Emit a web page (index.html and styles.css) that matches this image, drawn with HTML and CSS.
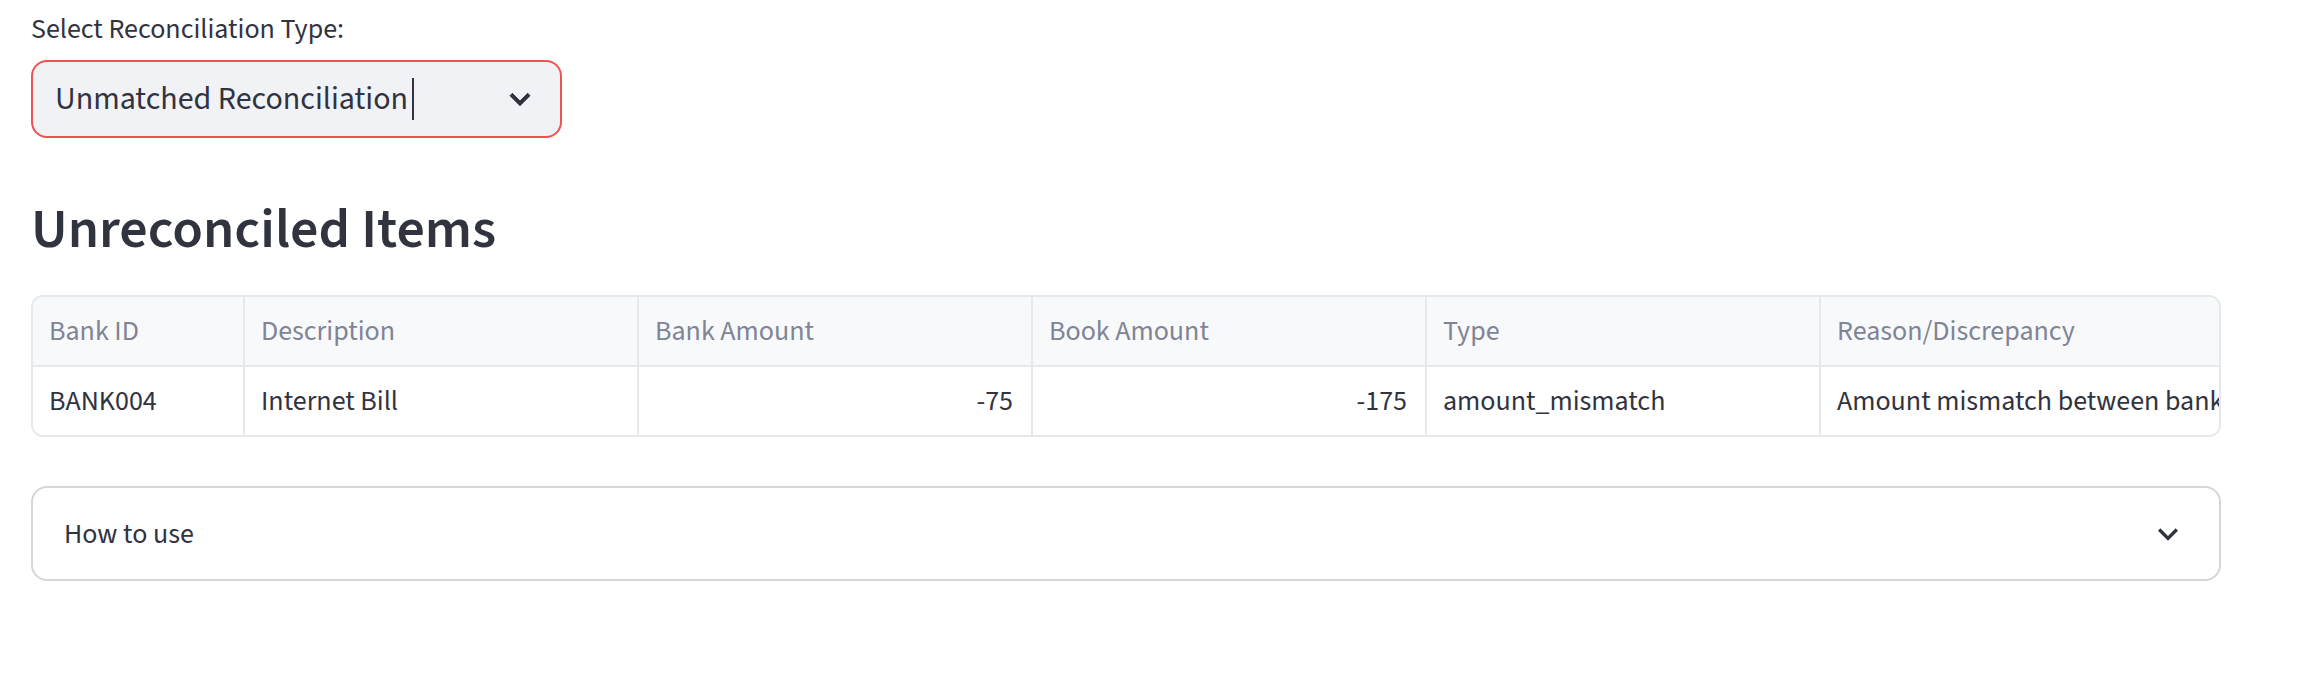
FILE: index.html
```html
<!DOCTYPE html>
<html lang="en">
<head>
<meta charset="utf-8">
<title>Reconciliation</title>
<link rel="stylesheet" href="styles.css">
</head>
<body>
<main class="page">
  <div class="field">
    <label class="field-label">Select Reconciliation Type:</label>
    <div class="select">
      <span class="select-value">Unmatched Reconciliation</span><span class="caret"></span>
      <svg class="select-chevron" viewBox="0 0 24 24" width="40" height="40" aria-hidden="true"><path d="M16.59 8.59L12 13.17 7.41 8.59 6 10l6 6 6-6z"/></svg>
    </div>
  </div>

  <h3 class="heading">Unreconciled Items</h3>

  <div class="grid-wrap">
    <div class="grid">
      <div class="cell head">Bank ID</div>
      <div class="cell head">Description</div>
      <div class="cell head">Bank Amount</div>
      <div class="cell head">Book Amount</div>
      <div class="cell head">Type</div>
      <div class="cell head last">Reason/Discrepancy</div>
      <div class="cell body">BANK004</div>
      <div class="cell body">Internet Bill</div>
      <div class="cell body num">-75</div>
      <div class="cell body num">-175</div>
      <div class="cell body">amount_mismatch</div>
      <div class="cell body last">Amount mismatch between bank and book records</div>
    </div>
  </div>

  <div class="expander">
    <span class="expander-label">How to use</span>
    <svg class="expander-chevron" viewBox="0 0 24 24" width="40" height="40" aria-hidden="true"><path d="M16.59 8.59L12 13.17 7.41 8.59 6 10l6 6 6-6z"/></svg>
  </div>
</main>
</body>
</html>
```

FILE: styles.css
```css
* { box-sizing: border-box; }

html, body {
  margin: 0;
  padding: 0;
  background: #ffffff;
}

body {
  font-family: "Source Sans Pro", "Source Sans 3", Lato, sans-serif;
  color: #31333f;
}

.page {
  width: 2221px;
  padding: 8px 0 0 31px;
  display: flex;
  flex-direction: column;
}

.field {
  display: flex;
  flex-direction: column;
  width: 531px;
}

.field-label {
  font-size: 28px;
  line-height: 42px;
  height: 42px;
  margin-bottom: 10px;
  color: #31333f;
}

.select {
  height: 78px;
  background: #f0f2f6;
  border: 2px solid #ef5350;
  border-radius: 16px;
  display: flex;
  align-items: center;
  padding: 0 20px 0 22px;
}

.select-value {
  font-size: 32px;
  line-height: 1;
  color: #31333f;
}

.caret {
  display: inline-block;
  width: 2px;
  height: 42px;
  background: #31333f;
  margin-left: 4px;
}

.select-chevron {
  margin-left: auto;
  fill: #31333f;
  stroke: #31333f;
  stroke-width: 0.6;
}

.heading {
  margin: 58px 0 0 0;
  font-size: 56px;
  line-height: 67px;
  font-weight: 600;
  color: #31333f;
}

.grid-wrap {
  margin-top: 32px;
  width: 2190px;
  border: 2px solid #e6e8ec;
  border-radius: 12px;
  overflow: hidden;
}

.grid {
  display: grid;
  grid-template-columns: 212px 394px 394px 394px 394px 900px;
  grid-template-rows: 70px 68px;
}

.cell {
  display: flex;
  align-items: center;
  padding: 0 16px;
  font-size: 28px;
  white-space: nowrap;
  overflow: hidden;
  border-right: 2px solid #e6e8ec;
}

.cell.last { border-right: none; }

.cell.head {
  background: #f8f9fb;
  color: #808495;
  border-bottom: 2px solid #e6e8ec;
}

.cell.body {
  background: #ffffff;
  color: #31333f;
}

.cell.num {
  justify-content: flex-end;
  padding-right: 18px;
}

.expander {
  margin-top: 49px;
  width: 2190px;
  height: 95px;
  border: 2px solid #d6d6d9;
  border-radius: 16px;
  display: flex;
  align-items: center;
  padding: 0 31px 0 31px;
}

.expander-label {
  font-size: 28px;
  color: #31333f;
}

.expander-chevron {
  margin-left: auto;
  fill: #31333f;
}
```
